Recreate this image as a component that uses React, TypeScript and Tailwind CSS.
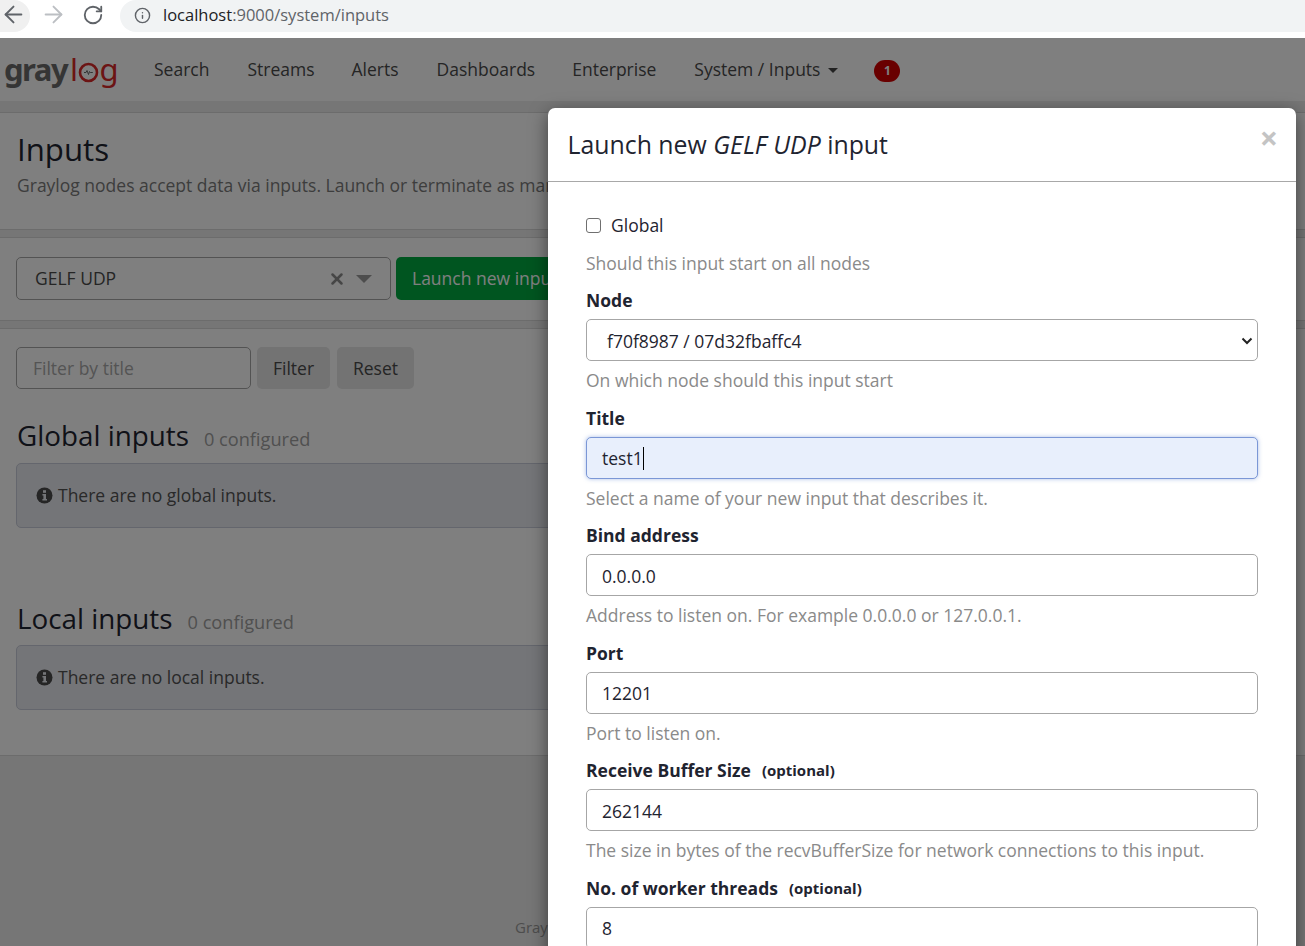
import { ArrowLeft, ArrowRight, Info, RotateCw, X } from "lucide-react";

function Logo() {
  return (
    <div className="flex items-center text-[31px] leading-none tracking-[-1.5px] font-['Noto_Sans',sans-serif]">
      <span className="font-bold text-[#6a6a6a]">gray</span>
      <span className="ml-[3px] text-[#d82828]">l</span>
      <svg width="21" height="21" viewBox="0 0 21 21" className="mt-[5px] mx-[1px]">
        <circle cx="10.5" cy="10.5" r="8.5" fill="none" stroke="#d82828" strokeWidth="2.6" />
        <path d="M6 10.5h2l1-2 1.5 4 1-3 .8 1h2.5" fill="none" stroke="#666" strokeWidth="1" />
      </svg>
      <span className="text-[#d82828]">g</span>
    </div>
  );
}

function Alert({ text }: { text: string }) {
  return (
    <div className="flex h-[65px] items-center gap-[5px] rounded-[5px] border border-[#c9cdda] bg-[#e8eaf0] pl-[19px] text-[#525252]">
      <svg width="17" height="17" viewBox="0 0 17 17">
        <circle cx="8.5" cy="8.5" r="8" fill="#4a4a4a" />
        <rect x="7" y="3.2" width="3" height="2.6" fill="#e8eaf0" />
        <path d="M6.4 7h3.6v5h1v1.4H6.4V12h1V8.4h-1z" fill="#e8eaf0" />
      </svg>
      {text}
    </div>
  );
}

function Field({
  label,
  optional,
  value,
  help,
  focused,
}: {
  label: string;
  optional?: boolean;
  value: string;
  help: string;
  focused?: boolean;
}) {
  return (
    <div className="mb-[13.5px]">
      <div className="mb-[6.5px] flex h-[24px] items-center font-bold text-[#1f2430]">
        {label}
        {optional && <span className="ml-[11px] text-[15px]">(optional)</span>}
      </div>
      <div
        className={
          focused
            ? "flex h-[42px] items-center rounded-[5px] border border-[#7b97d6] bg-[#e8effc] pl-[15px] pt-[2px] text-[#1f2430] shadow-[0_0_4px_rgba(90,130,210,0.5)]"
            : "flex h-[42px] items-center rounded-[5px] border border-[#a6a6a6] bg-white pl-[15px] pt-[2px] text-[#1f2430]"
        }
      >
        {value}
        {focused && <span className="h-[23px] w-px bg-black" />}
      </div>
      <div className="mt-[7.5px] flex h-[24px] items-center text-[#8a8a8a]">{help}</div>
    </div>
  );
}

export default function App() {
  return (
    <div className="relative h-[946px] w-[1305px] overflow-hidden bg-[#ececec] text-[17.5px] font-['Open_Sans',sans-serif]">
      <div className="flex h-[38px] items-start bg-white">
        <div className="flex h-[32px] w-[30px] items-center justify-center rounded-r-full bg-[#f0f0f0] pb-[4px] pr-[4px]">
          <ArrowLeft size={27} strokeWidth={1.7} className="shrink-0 text-[#5f6368]" />
        </div>
        <div className="ml-[9.5px] flex h-[28px] w-[27px] items-center">
          <ArrowRight size={27} strokeWidth={1.7} className="text-[#bcbfc3]" />
        </div>
        <div className="ml-[15.5px] flex h-[29px] w-[22px] items-center">
          <RotateCw size={22} strokeWidth={2} className="text-[#5f6368]" />
        </div>
        <div className="ml-[16px] flex h-[32px] flex-1 items-center rounded-l-full bg-[#f1f3f4] pb-[2px] pl-[14px] text-[16.5px]">
          <Info size={17} strokeWidth={2} className="text-[#5f6368]" />
          <span className="ml-[12px] text-[#202124]">localhost</span>
          <span className="text-[#5f6368]">:9000/system/inputs</span>
        </div>
      </div>

      <div className="text-[#3a3a3a]">
        <nav className="flex h-[63px] items-center bg-white text-[#4a4a4a]">
          <div className="ml-[4px] w-[150px]">
            <Logo />
          </div>
          <span>Search</span>
          <span className="ml-[38px]">Streams</span>
          <span className="ml-[37px]">Alerts</span>
          <span className="ml-[38px]">Dashboards</span>
          <span className="ml-[37px]">Enterprise</span>
          <span className="ml-[38px]">System / Inputs</span>
          <span className="ml-[8px] mt-[2px] h-0 w-0 border-x-[5px] border-t-[5px] border-x-transparent border-t-[#444444]" />
          <span className="ml-[36px] mt-[3px] flex h-[22px] w-[26px] items-center justify-center rounded-full bg-[#d20000] text-[12px] font-bold text-white">
            1
          </span>
        </nav>

        <div className="h-[11px]" />

        <section className="h-[118px] border-y border-[#d8d8d8] bg-white pl-[17px] pt-[13px]">
          <h1 className="text-[31.2px] leading-[46px] text-[#1f2430]">Inputs</h1>
          <p className="whitespace-nowrap text-[#7a7a7a]">
            Graylog nodes accept data via inputs. Launch or terminate as many inputs as you want here.
          </p>
        </section>

        <div className="h-[7px]" />

        <section className="flex h-[84px] items-start border-y border-[#d8d8d8] bg-white pl-[16px] pt-[19px]">
          <div className="flex h-[43px] w-[375px] items-center rounded-[5px] border border-[#a6a6a6] pl-[18px] pr-[18px] text-[#4a4a4a]">
            <span className="flex-1">GELF UDP</span>
            <X size={18} strokeWidth={3.4} className="text-[#8c8c8c]" />
            <span className="ml-[10px] h-0 w-0 border-x-[8px] border-t-[8px] border-x-transparent border-t-[#9a9a9a]" />
          </div>
          <div className="ml-[5px] flex h-[43px] w-[170px] items-center whitespace-nowrap rounded-[5px] bg-[#00ab41] pl-[16px] text-white">
            Launch new input
          </div>
        </section>

        <div className="h-[7px]" />

        <section className="h-[428px] border-y border-[#d8d8d8] bg-white px-[16px] pt-[18px]">
          <div className="flex items-center">
            <div className="flex h-[42px] w-[235px] items-center rounded-[5px] border border-[#a6a6a6] pl-[16px] text-[#a8a8a8]">
              Filter by title
            </div>
            <div className="ml-[6px] flex h-[42px] w-[73px] items-center justify-center rounded-[5px] bg-[#e6e6e6] text-[#4a4a4a]">
              Filter
            </div>
            <div className="ml-[7px] flex h-[42px] w-[77px] items-center justify-center rounded-[5px] bg-[#e6e6e6] text-[#4a4a4a]">
              Reset
            </div>
          </div>

          <div className="mt-[28px] mb-[8px] flex h-[38px] items-center">
            <h2 className="ml-[1px] text-[27.8px] text-[#1f2430]">Global inputs</h2>
            <span className="ml-[15px] mt-[7px] text-[18.2px] text-[#a0a0a0]">0 configured</span>
          </div>
          <Alert text="There are no global inputs." />

          <div className="mt-[72px] mb-[7px] flex h-[38px] items-center">
            <h2 className="ml-[1px] text-[27.8px] text-[#1f2430]">Local inputs</h2>
            <span className="ml-[15px] mt-[7px] text-[18.2px] text-[#a0a0a0]">0 configured</span>
          </div>
          <Alert text="There are no local inputs." />
        </section>

        <footer className="pt-[160px] pl-[515px] text-[15px] text-[#9a9a9a]">Graylog</footer>
      </div>

      {/* backdrop starts below the browser chrome */}
      <div className="absolute inset-x-0 bottom-0 top-[38px] bg-black/50" />

      <div className="absolute left-[548px] top-[108px] w-[748px] rounded-t-[7px] bg-white text-[#1f2430] shadow-[0_5px_18px_rgba(0,0,0,0.5)]">
        <div className="relative flex h-[74px] items-center border-b border-[#a8a8a8] pl-[19.5px] text-[24.85px]">
          <span>
            Launch new <em>GELF UDP</em> input
          </span>
          <span className="absolute right-[18px] top-[9px] text-[32px] font-bold leading-[42px] text-[#c4c4c4]">×</span>
        </div>
        <div className="pl-[38px] pr-[38px]">
          <div className="mt-[31px] flex h-[24px] items-center">
            <span className="h-[15px] w-[15px] rounded-[3px] border border-[#6f6f6f] bg-white" />
            <span className="ml-[10px]">Global</span>
          </div>
          <div className="mt-[14px] mb-[13.5px] flex h-[24px] items-center text-[#8a8a8a]">Should this input start on all nodes</div>

          <div className="mb-[13.5px]">
            <div className="mb-[6.5px] flex h-[24px] items-center font-bold">Node</div>
            <div className="flex h-[42px] items-center rounded-[5px] border border-[#a6a6a6] bg-white pl-[20px] pr-[4px] pt-[2px]">
              <span className="flex-1">f70f8987 / 07d32fbaffc4</span>
              <svg width="12" height="8" viewBox="0 0 12 8">
                <path d="M1.5 1.5 6 6l4.5-4.5" fill="none" stroke="#222" strokeWidth="2" />
              </svg>
            </div>
            <div className="mt-[7.5px] flex h-[24px] items-center text-[#8a8a8a]">On which node should this input start</div>
          </div>

          <Field label="Title" value="test1" help="Select a name of your new input that describes it." focused />
          <Field label="Bind address" value="0.0.0.0" help="Address to listen on. For example 0.0.0.0 or 127.0.0.1." />
          <Field label="Port" value="12201" help="Port to listen on." />
          <Field
            label="Receive Buffer Size"
            optional
            value="262144"
            help="The size in bytes of the recvBufferSize for network connections to this input."
          />
          <Field label="No. of worker threads" optional value="8" help="" />
        </div>
      </div>
    </div>
  );
}
